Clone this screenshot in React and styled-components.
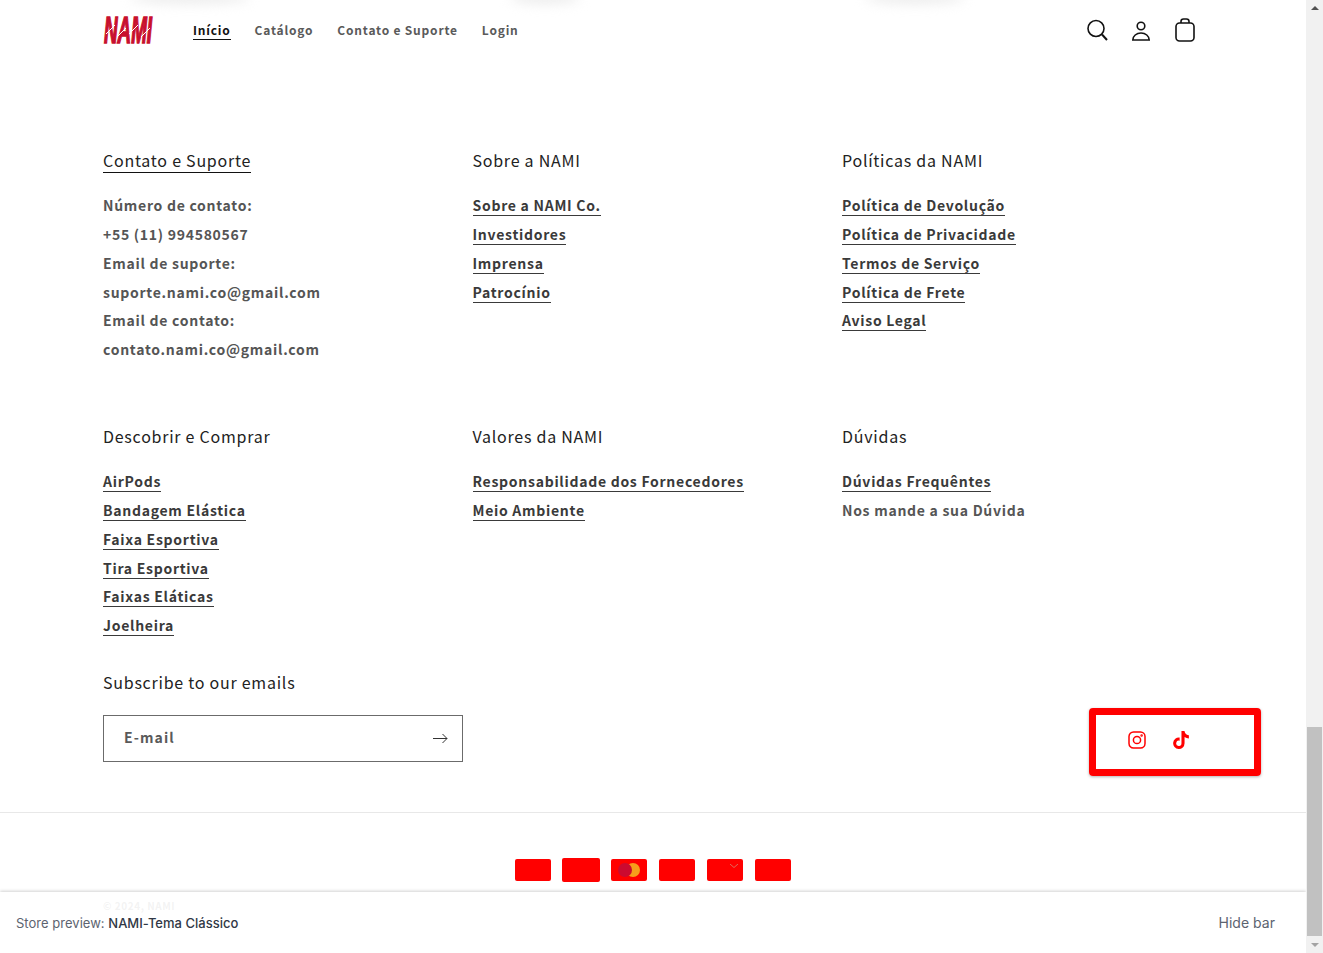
import React from 'react';
import styled, { createGlobalStyle } from 'styled-components';
import { FaTiktok } from 'react-icons/fa';

const GlobalStyle = createGlobalStyle`
  html, body {
    margin: 0;
    padding: 0;
    height: 953px;
    overflow: hidden;
    background: #fff;
  }
  * {
    box-sizing: border-box;
  }
`;

const BODY_FONT = `'Noto Sans CJK KR', 'Noto Sans', sans-serif`;

const Shell = styled.div`
  display: flex;
  width: 1323px;
  height: 953px;
  font-family: ${BODY_FONT};
`;

const Page = styled.div`
  position: relative;
  flex: 1;
  height: 953px;
  overflow: hidden;
  background: #fff;
`;

const Smudge = styled.span`
  position: absolute;
  top: -8px;
  left: ${props => props.$left}px;
  width: ${props => props.$width}px;
  height: 12px;
  border-radius: 50%;
  background: #ececec;
  filter: blur(6px);
`;

const Header = styled.header`
  display: flex;
  align-items: center;
  height: 60px;
  padding: 0 109px 0 103px;
`;

const Logo = styled.svg`
  width: 50px;
  height: 27px;
  margin-right: 40px;
  display: block;
  overflow: visible;
`;

const Nav = styled.nav`
  display: flex;
  gap: 24px;
  flex: 1;
`;

const NavLink = styled.a`
  font-size: 12px;
  font-weight: 700;
  letter-spacing: 0.8px;
  line-height: 18px;
  color: ${props => (props.$active ? '#121212' : '#5a5a5a')};
  border-bottom: ${props => (props.$active ? '1px solid #121212' : '1px solid transparent')};
`;

const HeaderIcons = styled.div`
  display: flex;
  gap: 20px;
`;

const IconSvg = styled.svg`
  width: 24px;
  height: 24px;
  display: block;
  fill: none;
  stroke: #121212;
  stroke-width: 1.6;
`;

const Footer = styled.footer`
  padding: 85px 0 0;
`;

const FooterGrid = styled.div`
  display: grid;
  grid-template-columns: repeat(3, 369.5px);
  padding-left: 103px;
`;

const Column = styled.div`
  height: ${props => props.$height}px;
`;

const ColumnTitle = styled.h2`
  margin: 0 0 16.3px;
  font-size: 16px;
  font-weight: 400;
  line-height: 30px;
  letter-spacing: 0.75px;
  color: #222;
  span {
    border-bottom: ${props => (props.$underlined ? '1px solid #121212' : '0')};
  }
`;

const LinkList = styled.ul`
  list-style: none;
  margin: 0;
  padding: 0;
`;

const Item = styled.li`
  height: 28.8px;
  line-height: 28px;
  font-size: 14px;
  font-weight: 700;
  letter-spacing: 0.72px;
  color: #555;
`;

const Link = styled.a`
  color: #3a3a3a;
  border-bottom: 1px solid #3a3a3a;
`;

const SubscribeRow = styled.div`
  display: flex;
  justify-content: space-between;
  align-items: flex-end;
  padding: 0 45px 0 103px;
  height: 127px;
`;

const SubscribeBlock = styled.div`
  width: 360px;
`;

const SubscribeTitle = styled.h2`
  margin: 0 0 18px;
  font-size: 16px;
  font-weight: 400;
  line-height: 30px;
  letter-spacing: 0.75px;
  color: #222;
`;

const EmailBox = styled.div`
  display: flex;
  align-items: center;
  justify-content: space-between;
  height: 47px;
  padding: 0 14px 3px 20px;
  border: 1px solid #6b6b6b;
  font-size: 14px;
  font-weight: 700;
  letter-spacing: 1.1px;
  color: #5a5a5a;
`;

const ArrowIcon = styled.svg`
  width: 15px;
  height: 11px;
  margin-top: 3px;
  fill: none;
  stroke: #333;
  stroke-width: 1;
`;

const SocialBox = styled.div`
  display: flex;
  align-items: center;
  gap: 26px;
  width: 172px;
  height: 68px;
  margin-bottom: -14px;
  padding: 0 0 4px 32px;
  border: 7px solid #ff0000;
  border-radius: 4px;
  box-shadow: 0 1px 3px rgba(0, 0, 0, 0.3);
  color: #ff0000;
`;

const SocialIcon = styled.svg`
  width: 18px;
  height: 18px;
  fill: none;
  stroke: #ff0000;
  stroke-width: 1.5;
`;

const TikTok = styled(FaTiktok)`
  width: 18px;
  height: 18px;
`;

const Divider = styled.div`
  height: 1px;
  margin-top: 50px;
  background: #e8e8e8;
`;

const PaymentRow = styled.div`
  display: flex;
  justify-content: center;
  align-items: center;
  gap: 12px;
  margin-top: 45px;
`;

const PayCard = styled.div`
  display: flex;
  align-items: center;
  justify-content: center;
  position: relative;
  width: ${props => (props.$large ? '38px' : '36px')};
  height: ${props => (props.$large ? '24px' : '22px')};
  margin: ${props => (props.$large ? '0 -1px' : '0')};
  border-radius: 2px;
  background: #ff0000;
`;

const MasterDisc = styled.span`
  position: relative;
  z-index: ${props => (props.$overlap ? 0 : 1)};
  width: 14px;
  height: 14px;
  border-radius: 50%;
  background: ${props => props.$color};
  margin-left: ${props => (props.$overlap ? '-6px' : '0')};
`;

const CardTick = styled.svg`
  position: absolute;
  top: 5px;
  right: 5px;
  width: 8px;
  height: 4px;
  fill: none;
  stroke: #e06a5a;
  stroke-width: 1;
`;

const Copyright = styled.div`
  margin: 16px 0 0 103px;
  font-size: 10px;
  font-weight: 700;
  letter-spacing: 0.55px;
  color: #555;
`;

const PreviewBar = styled.div`
  position: absolute;
  left: 0;
  right: 0;
  bottom: 0;
  height: 61px;
  display: flex;
  align-items: center;
  justify-content: space-between;
  padding: 0 31px 0 16px;
  background: rgba(255, 255, 255, 0.93);
  box-shadow: 0 -1px 3px rgba(0, 0, 0, 0.18);
  font-family: Inter, 'Liberation Sans', sans-serif;
  font-size: 13px;
  letter-spacing: 0.02px;
  color: #5c6370;
`;

const StoreName = styled.span`
  font-weight: 500;
  color: #303845;
`;

const HideBar = styled.span`
  font-size: 14px;
`;

const Scrollbar = styled.div`
  position: relative;
  width: 17px;
  height: 953px;
  background: #f1f1f1;
`;

const ScrollThumb = styled.div`
  position: absolute;
  left: 1px;
  right: 1px;
  top: 727px;
  height: 209px;
  background: #c1c1c1;
`;

const ScrollArrow = styled.div`
  position: absolute;
  left: 5px;
  width: 0;
  height: 0;
  border-left: 4px solid transparent;
  border-right: 4px solid transparent;
  ${props =>
    props.$up
      ? 'top: 6px; border-bottom: 4px solid #505050;'
      : 'bottom: 6px; border-top: 4px solid #a3a3a3;'}
`;

const columnsTop = [
  {
    title: 'Contato e Suporte',
    underlined: true,
    items: [
      { text: 'Número de contato:' },
      { text: '+55 (11) 994580567' },
      { text: 'Email de suporte:' },
      { text: 'suporte.nami.co@gmail.com' },
      { text: 'Email de contato:' },
      { text: 'contato.nami.co@gmail.com' },
    ],
  },
  {
    title: 'Sobre a NAMI',
    items: [
      { text: 'Sobre a NAMI Co.', link: true },
      { text: 'Investidores', link: true },
      { text: 'Imprensa', link: true },
      { text: 'Patrocínio', link: true },
    ],
  },
  {
    title: 'Políticas da NAMI',
    items: [
      { text: 'Política de Devolução', link: true },
      { text: 'Política de Privacidade', link: true },
      { text: 'Termos de Serviço', link: true },
      { text: 'Política de Frete', link: true },
      { text: 'Aviso Legal', link: true },
    ],
  },
];

const columnsBottom = [
  {
    title: 'Descobrir e Comprar',
    items: [
      { text: 'AirPods', link: true },
      { text: 'Bandagem Elástica', link: true },
      { text: 'Faixa Esportiva', link: true },
      { text: 'Tira Esportiva', link: true },
      { text: 'Faixas Eláticas', link: true },
      { text: 'Joelheira', link: true },
    ],
  },
  {
    title: 'Valores da NAMI',
    items: [
      { text: 'Responsabilidade dos Fornecedores', link: true },
      { text: 'Meio Ambiente', link: true },
    ],
  },
  {
    title: 'Dúvidas',
    items: [
      { text: 'Dúvidas Frequêntes', link: true },
      { text: 'Nos mande a sua Dúvida' },
    ],
  },
];

const FooterRow = ({ columns, height }) => (
  <FooterGrid>
    {columns.map(column => (
      <Column key={column.title} $height={height}>
        <ColumnTitle $underlined={column.underlined}>
          <span>{column.title}</span>
        </ColumnTitle>
        <LinkList>
          {column.items.map(item => (
            <Item key={item.text}>
              {item.link ? <Link>{item.text}</Link> : item.text}
            </Item>
          ))}
        </LinkList>
      </Column>
    ))}
  </FooterGrid>
);

export default function App() {
  return (
    <Shell>
      <GlobalStyle />
      <Page>
        <Smudge $left={130} $width={120} />
        <Smudge $left={510} $width={70} />
        <Smudge $left={865} $width={100} />
        <Header>
          <Logo viewBox="0 0 50 27">
            <text
              x="1"
              y="26"
              fill="#c8102e"
              stroke="#c8102e"
              strokeWidth="1.6"
              fontFamily="'Liberation Sans', sans-serif"
              fontWeight="700"
              fontStyle="italic"
              fontSize="36"
              textLength="48"
              lengthAdjust="spacingAndGlyphs">
              NAMI
            </text>
            <path
              d="M3 17L12 8M14 20L23 11M26 17L35 8M38 20L47 11"
              stroke="#fff"
              strokeWidth="1"
            />
          </Logo>
          <Nav>
            <NavLink $active>Início</NavLink>
            <NavLink>Catálogo</NavLink>
            <NavLink>Contato e Suporte</NavLink>
            <NavLink>Login</NavLink>
          </Nav>
          <HeaderIcons>
            <IconSvg viewBox="0 0 24 24">
              <circle cx="11" cy="10.5" r="8" />
              <path d="M17 16.5l5 5.5" strokeWidth="2" />
            </IconSvg>
            <IconSvg viewBox="0 0 24 24">
              <circle cx="12" cy="8" r="3.8" />
              <path d="M3.800 22c0-4 3.700-7 8.200-7s8.200 3 8.200 7z" />
            </IconSvg>
            <IconSvg viewBox="0 0 24 24">
              <rect x="3" y="5" width="18" height="18" rx="3.500" />
              <path d="M8 5V3.500C8 2 9 1 10.500 1h3C15 1 16 2 16 3.500V5" />
            </IconSvg>
          </HeaderIcons>
        </Header>
        <Footer>
          <FooterRow columns={columnsTop} height={276} />
          <FooterRow columns={columnsBottom} height={214} />
          <SubscribeRow>
            <SubscribeBlock>
              <SubscribeTitle>Subscribe to our emails</SubscribeTitle>
              <EmailBox>
                E-mail
                <ArrowIcon viewBox="0 0 15 11">
                  <path d="M0 5.500h14M9.500 1l4.500 4.500-4.500 4.500" />
                </ArrowIcon>
              </EmailBox>
            </SubscribeBlock>
            <SocialBox>
              <SocialIcon viewBox="0 0 18 18">
                <rect x="1" y="1" width="16" height="16" rx="4.500" />
                <circle cx="9" cy="9" r="3.600" />
                <circle cx="13.600" cy="4.400" r="0.500" />
              </SocialIcon>
              <TikTok />
            </SocialBox>
          </SubscribeRow>
          <Divider />
          <PaymentRow>
            <PayCard />
            <PayCard $large />
            <PayCard>
              <MasterDisc $color="#cc0a2f" />
              <MasterDisc $color="#f79e1b" $overlap />
            </PayCard>
            <PayCard />
            <PayCard>
              <CardTick viewBox="0 0 8 4">
                <path d="M0 0l4 3.500L8 0" />
              </CardTick>
            </PayCard>
            <PayCard />
          </PaymentRow>
          <Copyright>© 2024, NAMI</Copyright>
        </Footer>
        <PreviewBar>
          <span>
            Store preview: <StoreName>NAMI-Tema Clássico</StoreName>
          </span>
          <HideBar>Hide bar</HideBar>
        </PreviewBar>
      </Page>
      <Scrollbar>
        <ScrollArrow $up />
        <ScrollThumb />
        <ScrollArrow />
      </Scrollbar>
    </Shell>
  );
}
